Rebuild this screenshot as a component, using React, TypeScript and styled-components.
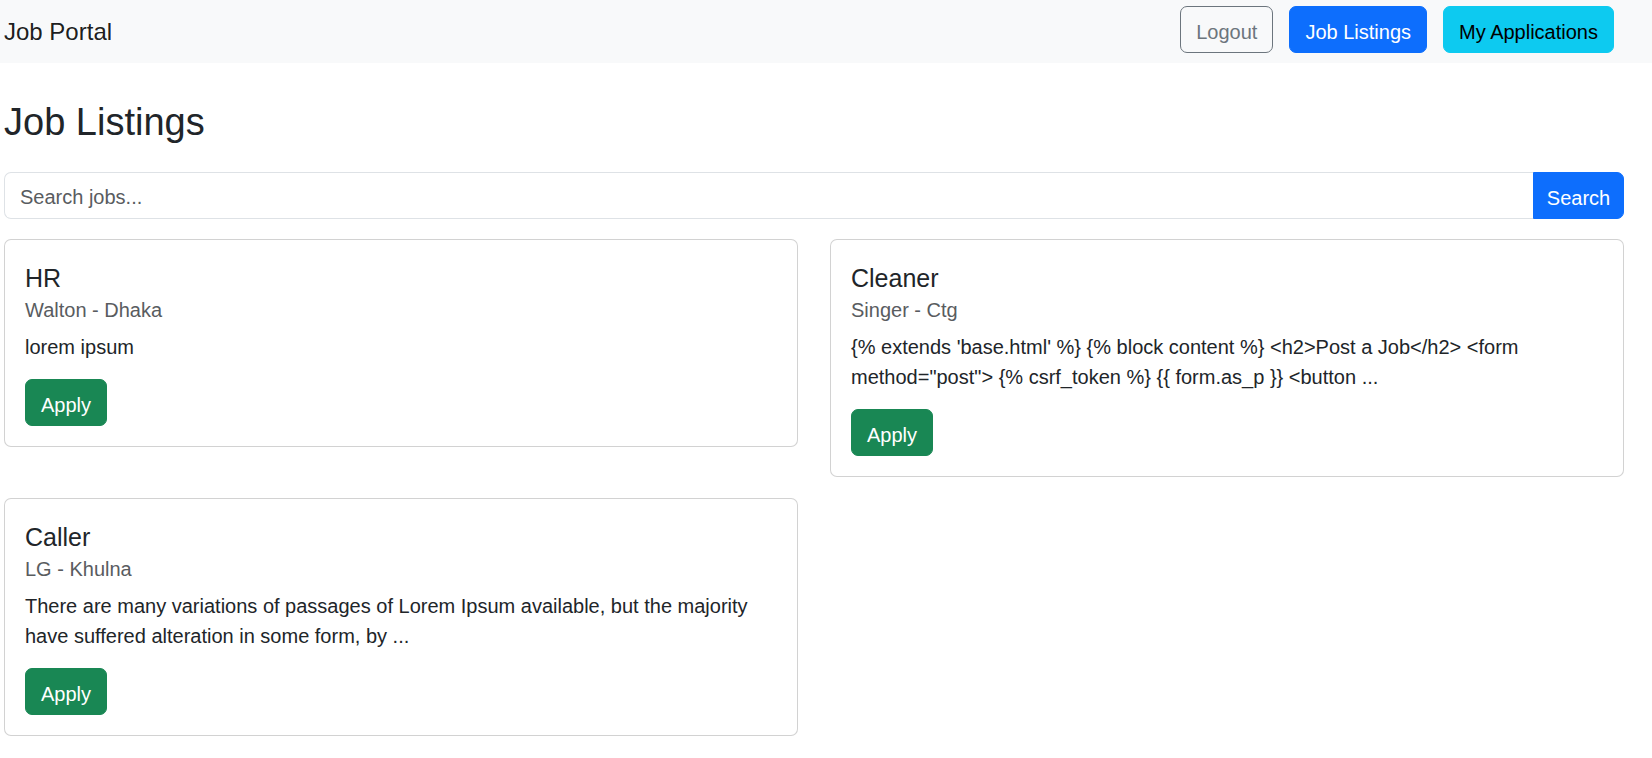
import styled, { createGlobalStyle, css } from 'styled-components';

type Job = {
  id: number;
  title: string;
  company: string;
  location: string;
  description: string;
};

const jobs: Job[] = [
  { id: 1, title: 'HR', company: 'Walton', location: 'Dhaka', description: 'lorem ipsum' },
  {
    id: 2,
    title: 'Cleaner',
    company: 'Singer',
    location: 'Ctg',
    description:
      '{% extends \'base.html\' %} {% block content %} <h2>Post a Job</h2> <form method="post"> {% csrf_token %} {{ form.as_p }} <button ...',
  },
  {
    id: 3,
    title: 'Caller',
    company: 'LG',
    location: 'Khulna',
    description:
      'There are many variations of passages of Lorem Ipsum available, but the majority have suffered alteration in some form, by ...',
  },
];

export default function App() {
  return (
    <>
      <GlobalStyle />
      <Navbar>
        <Brand>Job Portal</Brand>
        <NavActions>
          <Button $variant='outline'>Logout</Button>
          <Button $variant='primary'>Job Listings</Button>
          <Button $variant='info'>My Applications</Button>
        </NavActions>
      </Navbar>

      <Main>
        <PageTitle>Job Listings</PageTitle>

        <SearchGroup>
          <SearchInput type='text' placeholder='Search jobs...' />
          <SearchButton $variant='primary'>Search</SearchButton>
        </SearchGroup>

        <JobGrid>
          {jobs.map((job) => (
            <Card key={job.id}>
              <CardTitle>{job.title}</CardTitle>
              <CardSubtitle>
                {job.company} - {job.location}
              </CardSubtitle>
              <CardText>{job.description}</CardText>
              <Button $variant='success'>Apply</Button>
            </Card>
          ))}
        </JobGrid>
      </Main>
    </>
  );
}

const GlobalStyle = createGlobalStyle`
  * {
    box-sizing: border-box;
  }

  body {
    margin: 0;
    background: #fff;
    color: #212529;
    font-family: 'Liberation Sans', Arial, sans-serif;
    font-size: 20px;
    line-height: 1.5;
  }
`;

const Navbar = styled.nav`
  height: 63px;
  padding: 0 38px 4px 4px;
  display: flex;
  align-items: center;
  justify-content: space-between;
  background-color: #f8f9fa;
`;

const Brand = styled.a`
  padding-top: 4px;
  font-size: 24px;
  line-height: 37.5px;
  color: rgba(0, 0, 0, 0.9);
  text-decoration: none;
`;

const NavActions = styled.div`
  display: flex;
  gap: 16px;
`;

const variants = {
  outline: css`
    color: #6c757d;
    background-color: transparent;
    border-color: #6c757d;
  `,
  primary: css`
    color: #fff;
    background-color: #0d6efd;
    border-color: #0d6efd;
  `,
  info: css`
    color: #000;
    background-color: #0dcaf0;
    border-color: #0dcaf0;
  `,
  success: css`
    color: #fff;
    background-color: #198754;
    border-color: #198754;
  `,
};

const Button = styled.button<{ $variant: keyof typeof variants }>`
  height: 47px;
  padding: 4px 15px 0;
  display: inline-flex;
  align-items: center;
  border: 1px solid transparent;
  border-radius: 7px;
  font-family: inherit;
  font-size: 20px;
  line-height: 30px;
  cursor: pointer;
  ${({ $variant }) => variants[$variant]}
`;

const Main = styled.main`
  padding: 0 28px 20px 4px;
`;

const PageTitle = styled.h1`
  margin: 35px 0 0;
  font-size: 38px;
  font-weight: 400;
  line-height: 48px;
`;

const SearchGroup = styled.div`
  margin: 26px 0 20px;
  display: flex;
  height: 47px;
`;

const SearchInput = styled.input`
  flex: 1;
  min-width: 0;
  padding: 4px 15px 0;
  border: 1px solid #dee2e6;
  border-right: none;
  border-radius: 7px 0 0 7px;
  font-family: inherit;
  font-size: 20px;
  color: #212529;
  outline: none;

  &::placeholder {
    color: #595c5f;
  }
`;

const SearchButton = styled(Button)`
  width: 91px;
  justify-content: center;
  padding: 4px 0 0;
  border-radius: 0 7px 7px 0;
`;

const JobGrid = styled.div`
  display: grid;
  grid-template-columns: 1fr 1fr;
  column-gap: 32px;
  row-gap: 21px;
  align-items: start;
`;

const Card = styled.div`
  padding: 23px 20px 20px;
  border: 1px solid rgba(0, 0, 0, 0.175);
  border-radius: 7px;
  background: #fff;
`;

const CardTitle = styled.h5`
  margin: 0 0 10px;
  font-size: 25px;
  font-weight: 400;
  line-height: 30px;
`;

const CardSubtitle = styled.h6`
  margin: -5px 0 10px;
  font-size: 20px;
  font-weight: 400;
  line-height: 24px;
  color: #595c5f;
`;

const CardText = styled.p`
  margin: 0 0 17px;
  font-size: 20px;
  line-height: 30px;
`;
